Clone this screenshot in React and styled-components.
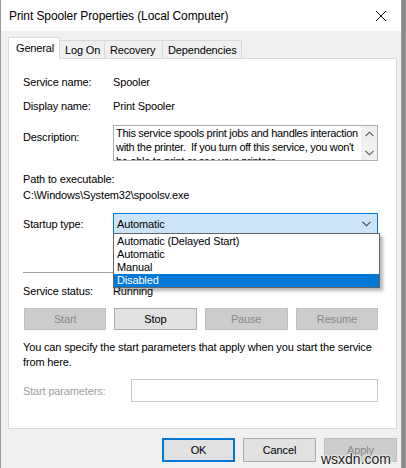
import React from "react";
import styled, { createGlobalStyle } from "styled-components";

const GlobalStyle = createGlobalStyle`
  html, body {
    margin: 0;
    padding: 0;
    background: #8c8c8c;
  }
  body {
    font-family: "Segoe UI", "Liberation Sans", Arial, sans-serif;
    font-size: 11px;
    letter-spacing: -0.15px;
    color: #000;
  }
`;

const Window = styled.div`
  position: relative;
  width: 402px;
  height: 468px;
  background: #f0f0f0;
  border-left: 1px solid #9a9a9a;
  border-right: 1px solid #9a9a9a;
  overflow: hidden;
  box-sizing: border-box;
`;

const TitleBar = styled.div`
  height: 31px;
  background: #fff;
  display: flex;
  align-items: center;
  justify-content: space-between;
  padding: 0 8px 0 8px;
  font-size: 12px;
  letter-spacing: -0.1px;
`;

const CloseIcon = styled.svg`
  width: 12px;
  height: 12px;
  margin-right: 6px;
`;

const Body = styled.div`
  padding: 6px 0 0 7px;
`;

const Tabs = styled.div`
  display: flex;
  align-items: flex-end;
  height: 22px;
  margin-bottom: -1px;
  position: relative;
  z-index: 1;
`;

const Tab = styled.div`
  box-sizing: border-box;
  width: ${(p) => p.$w}px;
  height: ${(p) => (p.$active ? 22 : 19)}px;
  border: 1px solid #d9d9d9;
  border-bottom: ${(p) => (p.$active ? "none" : "1px solid #d9d9d9")};
  border-left: ${(p) => (p.$first || p.$active ? "1px solid #d9d9d9" : "none")};
  background: ${(p) => (p.$active ? "#fff" : "#f0f0f0")};
  padding-left: ${(p) => (p.$active ? 7 : 5)}px;
  line-height: ${(p) => (p.$active ? 20 : 18)}px;
  white-space: nowrap;
`;

const Panel = styled.div`
  position: relative;
  box-sizing: border-box;
  width: 389px;
  height: 371px;
  background: #fff;
  border: 1px solid #d9d9d9;
  padding: 15px 18px 0 14px;
`;

const Row = styled.div`
  display: flex;
  align-items: ${(p) => (p.$top ? "flex-start" : "center")};
  margin-top: ${(p) => p.$mt || 0}px;
  min-height: 16px;
`;

const Label = styled.div`
  width: ${(p) => p.$w || 90}px;
  flex: none;
  line-height: 16px;
  color: ${(p) => (p.$disabled ? "#a0a0a0" : "#000")};
  padding-top: ${(p) => p.$pt || 0}px;
`;

const Value = styled.div`
  line-height: 16px;
`;

const Line = styled.div`
  line-height: 16px;
  margin-top: ${(p) => p.$mt || 0}px;
`;

const DescBox = styled.div`
  box-sizing: border-box;
  width: 267px;
  height: 36px;
  border: 1px solid #adadad;
  display: flex;
  overflow: hidden;
`;

const DescText = styled.div`
  flex: 1;
  padding: 0 0 0 2px;
  line-height: 14px;
  letter-spacing: -0.3px;
  white-space: nowrap;
  overflow: hidden;
`;

const ScrollBar = styled.div`
  width: 16px;
  flex: none;
  background: #f0f0f0;
  display: flex;
  flex-direction: column;
  justify-content: space-between;
  align-items: center;
  padding: 5px 0 4px;
`;

const Chevron = styled.svg`
  width: 9px;
  height: 6px;
`;

const Combo = styled.div`
  position: relative;
  box-sizing: border-box;
  width: 267px;
  height: 21px;
  border: 1px solid #0078d7;
  background: #cce4f7;
  display: flex;
  align-items: center;
  justify-content: space-between;
  padding: 0 6px 0 3px;
`;

const DropList = styled.div`
  position: absolute;
  top: 19px;
  left: -1px;
  width: 267px;
  box-sizing: border-box;
  background: #fff;
  border: 1px solid #646464;
  padding-top: 1px;
  box-shadow: 3px 3px 3px rgba(0, 0, 0, 0.28);
  z-index: 5;
`;

const Option = styled.div`
  height: 13px;
  line-height: 13px;
  padding-left: 3px;
  background: ${(p) => (p.$selected ? "#0078d7" : "transparent")};
  color: ${(p) => (p.$selected ? "#fff" : "#000")};
`;

const Separator = styled.div`
  height: 1px;
  background: #a0a0a0;
  margin-top: 38px;
  width: 356px;
`;

const ButtonRow = styled.div`
  display: flex;
  gap: 8px;
  margin-top: 9px;
  padding-left: 1px;
`;

const Button = styled.div`
  box-sizing: border-box;
  width: ${(p) => p.$w || 83}px;
  height: ${(p) => p.$h || 22}px;
  display: flex;
  align-items: center;
  justify-content: center;
  background: ${(p) => (p.$disabled ? "#cccccc" : "#e1e1e1")};
  border: ${(p) =>
    p.$default ? "2px solid #0078d7" : p.$disabled ? "1px solid #bfbfbf" : "1px solid #adadad"};
  color: ${(p) => (p.$disabled ? "#8a8a8a" : "#000")};
`;

const Paragraph = styled.div`
  margin-top: 10px;
  line-height: 15px;
  white-space: nowrap;
`;

const ParamInput = styled.div`
  box-sizing: border-box;
  width: 249px;
  height: 23px;
  border: 1px solid #c8c8c8;
  background: #fff;
`;

const Footer = styled.div`
  display: flex;
  justify-content: flex-end;
  gap: 8px;
  padding: 9px 4px 0 0;
`;

const Watermark = styled.div`
  position: absolute;
  right: 10px;
  bottom: 1px;
  font-family: "Liberation Sans", Arial, sans-serif;
  font-size: 14px;
  letter-spacing: 0;
  color: #222;
  text-shadow: 0 0 2px #fff, 0 0 2px #fff, 0 0 3px #fff;
`;

const ChevronDown = ({ color = "#555" }) => (
  <Chevron viewBox="0 0 9 6">
    <path d="M0.5 0.8 L4.5 4.8 L8.5 0.8" fill="none" stroke={color} strokeWidth="1.1" />
  </Chevron>
);

const ChevronUp = ({ color = "#555" }) => (
  <Chevron viewBox="0 0 9 6">
    <path d="M0.5 5.2 L4.5 1.2 L8.5 5.2" fill="none" stroke={color} strokeWidth="1.1" />
  </Chevron>
);

const tabs = [
  { name: "General", w: 52, active: true },
  { name: "Log On", w: 45 },
  { name: "Recovery", w: 58 },
  { name: "Dependencies", w: 79 },
];

const options = ["Automatic (Delayed Start)", "Automatic", "Manual", "Disabled"];

export default function App() {
  return (
    <>
      <GlobalStyle />
      <Window>
        <TitleBar>
          <span>Print Spooler Properties (Local Computer)</span>
          <CloseIcon viewBox="0 0 12 12">
            <path d="M1 1 L11 11 M11 1 L1 11" stroke="#111" strokeWidth="1" fill="none" />
          </CloseIcon>
        </TitleBar>
        <Body>
          <Tabs>
            {tabs.map((t, i) => (
              <Tab key={t.name} $w={t.w} $active={t.active} $first={i === 0}>
                {t.name}
              </Tab>
            ))}
          </Tabs>
          <Panel>
            <Row>
              <Label>Service name:</Label>
              <Value>Spooler</Value>
            </Row>
            <Row $mt={8}>
              <Label>Display name:</Label>
              <Value>Print Spooler</Value>
            </Row>
            <Row $mt={11} $top>
              <Label $pt={4}>Description:</Label>
              <DescBox>
                <DescText>
                  This service spools print jobs and handles interaction
                  <br />
                  with the printer.&nbsp; If you turn off this service, you won't
                  <br />
                  be able to print or see your printers.
                </DescText>
                <ScrollBar>
                  <ChevronUp />
                  <ChevronDown />
                </ScrollBar>
              </DescBox>
            </Row>
            <Line $mt={10}>Path to executable:</Line>
            <Line>C:\Windows\System32\spoolsv.exe</Line>
            <Row $mt={10}>
              <Label>Startup type:</Label>
              <Combo>
                <span>Automatic</span>
                <ChevronDown color="#444" />
                <DropList>
                  {options.map((o) => (
                    <Option key={o} $selected={o === "Disabled"}>
                      {o}
                    </Option>
                  ))}
                </DropList>
              </Combo>
            </Row>
            <Separator />
            <Row $mt={10}>
              <Label>Service status:</Label>
              <Value>Running</Value>
            </Row>
            <ButtonRow>
              <Button $disabled>Start</Button>
              <Button>Stop</Button>
              <Button $disabled $w={84}>Pause</Button>
              <Button $disabled>Resume</Button>
            </ButtonRow>
            <Paragraph>
              You can specify the start parameters that apply when you start the service
              <br />
              from here.
            </Paragraph>
            <Row $mt={9}>
              <Label $disabled $w={108}>Start parameters:</Label>
              <ParamInput />
            </Row>
          </Panel>
          <Footer>
            <Button $default $w={73} $h={24}>OK</Button>
            <Button $w={73} $h={24}>Cancel</Button>
            <Button $disabled $w={73} $h={24}>Apply</Button>
          </Footer>
        </Body>
        <Watermark>wsxdn.com</Watermark>
      </Window>
    </>
  );
}
